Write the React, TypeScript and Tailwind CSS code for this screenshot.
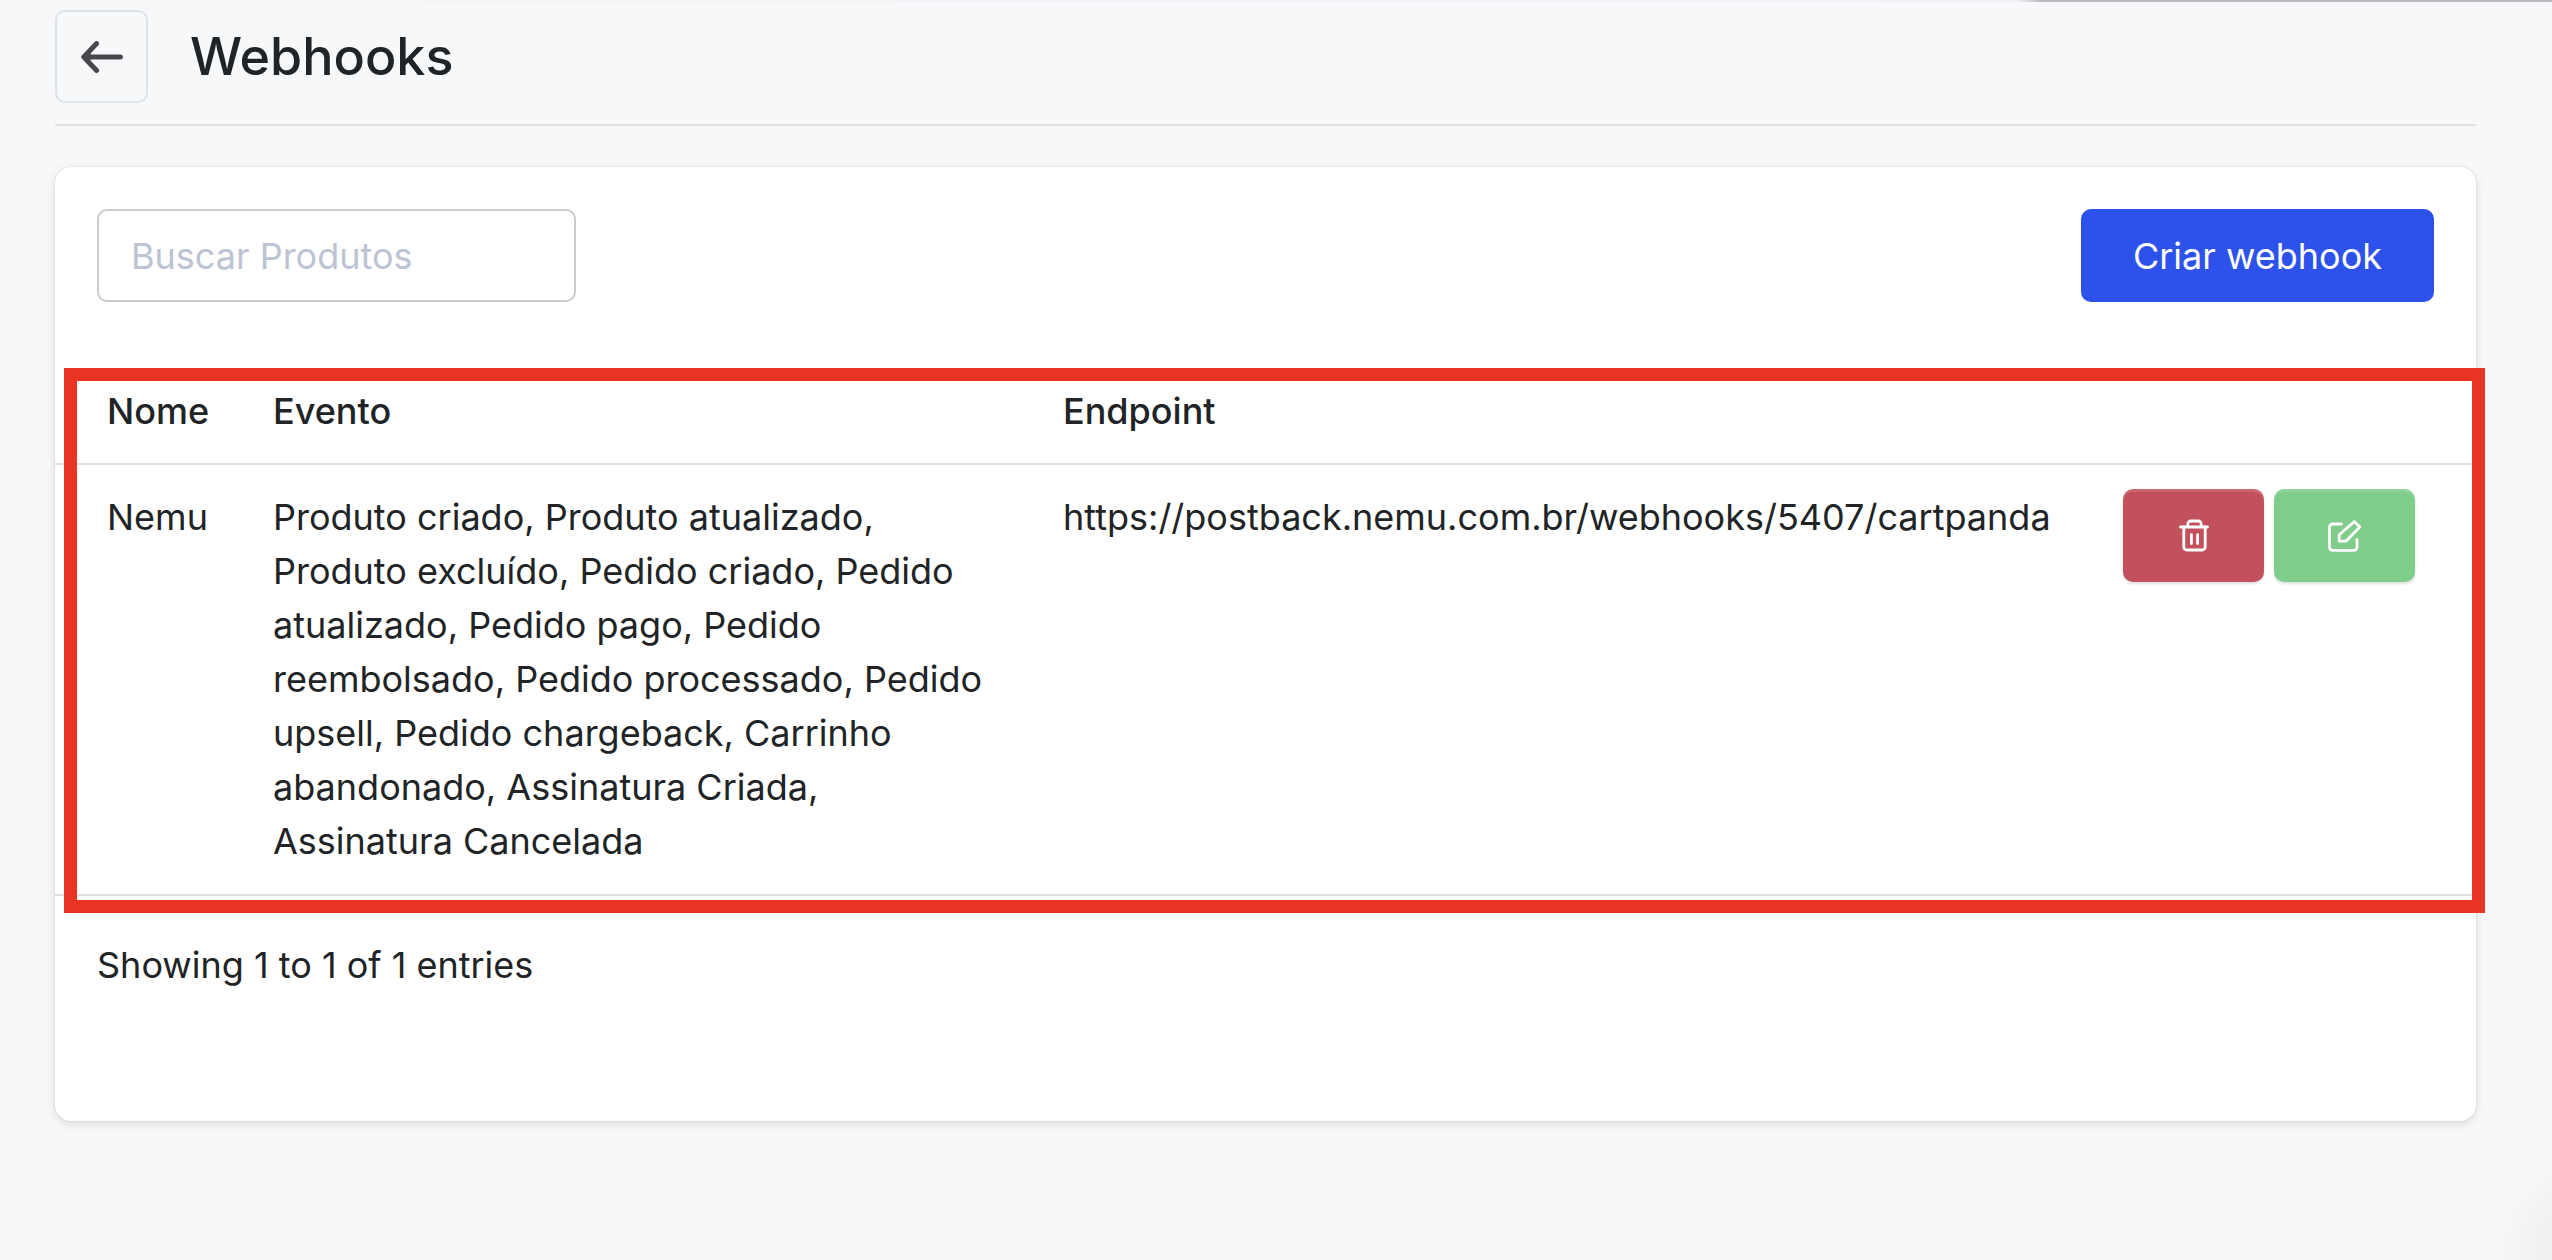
const rows = [
  {
    name: "Nemu",
    events:
      "Produto criado, Produto atualizado, Produto excluído, Pedido criado, Pedido atualizado, Pedido pago, Pedido reembolsado, Pedido processado, Pedido upsell, Pedido chargeback, Carrinho abandonado, Assinatura Criada, Assinatura Cancelada",
    endpoint: "https://postback.nemu.com.br/webhooks/5407/cartpanda",
  },
];

function BackIcon() {
  return (
    <svg width="42" height="32" viewBox="0 0 42 32" fill="none" stroke="#48494c" strokeWidth="5" strokeLinecap="round" strokeLinejoin="round">
      <path d="M39.4 16H4" />
      <path d="M15.6 2.6 2.8 16l12.8 13.4" />
      <path d="M9 12v8l-4-4z" fill="#48494c" strokeWidth="1" />
    </svg>
  );
}

function TrashIcon() {
  return (
    <svg width="50" height="50" viewBox="0 0 50 50" fill="none" stroke="currentColor" strokeWidth="2.8" strokeLinecap="round" strokeLinejoin="round">
      <path d="M11.5 16h27" />
      <path d="M14.8 16v20a3 3 0 0 0 3 3h15.4a3 3 0 0 0 3-3V16" />
      <path d="M18.8 15.5V13a3 3 0 0 1 3-3h7.4a3 3 0 0 1 3 3v2.5" />
      <path d="M22.4 23.6v9M28.6 23.6v9" />
    </svg>
  );
}

function EditIcon() {
  return (
    <svg width="50" height="50" viewBox="0 0 50 50" fill="none" stroke="currentColor" strokeWidth="2.8" strokeLinecap="round" strokeLinejoin="round">
      <path d="M21.5 13h-9a3 3 0 0 0-3 3v20.3a3 3 0 0 0 3 3H34a3 3 0 0 0 3-3V28.5" />
      <path d="M34.3 10.6 39.8 16 26 30.2h-6.8v-6.4z" />
    </svg>
  );
}

function ActionButton({ label, className, children }: { label: string; className: string; children: React.ReactNode }) {
  return (
    <button
      type="button"
      aria-label={label}
      className={`flex h-[93px] w-[141px] items-center justify-center rounded-[10px] text-white shadow-[inset_0_3px_0_rgba(255,255,255,0.12),0_2px_3px_rgba(0,0,0,0.12)] ${className}`}
    >
      {children}
    </button>
  );
}

export default function App() {
  return (
    <div className="min-h-screen bg-[#f7f8fa] bg-[radial-gradient(circle_at_calc(100%_+_40px)_calc(100%_-_10px),#dcdddf_0,#eeeff0_40px,#f7f8fa_100px)] font-['Inter',sans-serif] text-4xl text-[#212426]">
      <div className="h-0.5 bg-linear-to-r from-[#f6f8f6] from-0% via-[#efeff7] via-79% to-[#bcbbc3] to-80%" />
      <main className="pt-2 pr-[76px] pb-16 pl-[55px]">
        <header className="flex items-center gap-[42px] border-b-2 border-[#e2e3e5] pb-[21px]">
          <button type="button" aria-label="Voltar" className="flex size-[93px] items-center justify-center rounded-[10px] border-2 border-[#dfe2e9]">
            <BackIcon />
          </button>
          <h1 className="text-[52px] leading-[64px] font-medium">Webhooks</h1>
        </header>

        <section className="mt-[41px] rounded-2xl bg-white pb-[129px] shadow-[0_0_2px_rgba(0,0,0,0.12),0_3px_10px_rgba(0,0,0,0.12)]">
          <div className="flex items-center justify-between px-[42px] pt-[42px]">
            <input
              type="search"
              aria-label="Buscar Produtos"
              placeholder="Buscar Produtos"
              className="h-[93px] w-[479px] rounded-[10px] border-2 border-[#c9cbcf] px-8 placeholder:text-[#bcc3d2]"
            />
            <button type="button" className="h-[93px] rounded-[10px] bg-[#2d51eb] px-[52px] text-white">
              Criar webhook
            </button>
          </div>

          <div className="relative mt-[55px]">
            <table className="w-full text-left leading-[54px]">
              <thead>
                <tr className="border-b-2 border-[#e2e2e2]">
                  <th className="w-[186px] pt-[27px] pb-[25px] pl-[52px] font-medium">Nome</th>
                  <th className="w-[790px] pt-[27px] pb-[25px] pl-8 font-medium">Evento</th>
                  <th className="pt-[27px] pb-[25px] pl-8 font-medium">Endpoint</th>
                  <td />
                </tr>
              </thead>
              <tbody>
                {rows.map((row) => (
                  <tr key={row.name} className="border-b-2 border-[#e2e2e2] align-top">
                    <td className="pt-[25px] pb-[26px] pl-[52px]">{row.name}</td>
                    <td className="pt-[25px] pr-12 pb-[26px] pl-8">{row.events}</td>
                    <td className="pt-[25px] pb-[26px] pl-8">{row.endpoint}</td>
                    <td className="pt-6 pb-[26px]">
                      <div className="flex justify-end gap-[10px] pr-[61px]">
                        <ActionButton label="Excluir" className="bg-[#c3515d]">
                          <TrashIcon />
                        </ActionButton>
                        <ActionButton label="Editar" className="bg-[#80cd8b]">
                          <EditIcon />
                        </ActionButton>
                      </div>
                    </td>
                  </tr>
                ))}
              </tbody>
            </table>
            {/* highlight frame around the table */}
            <div className="pointer-events-none absolute top-[11px] -right-[9px] -bottom-[17px] left-[9px] border-[13px] border-[#e93323]" />
          </div>

          <p className="px-[42px] pt-[42px] leading-[54px]">Showing 1 to 1 of 1 entries</p>
        </section>
      </main>
    </div>
  );
}
